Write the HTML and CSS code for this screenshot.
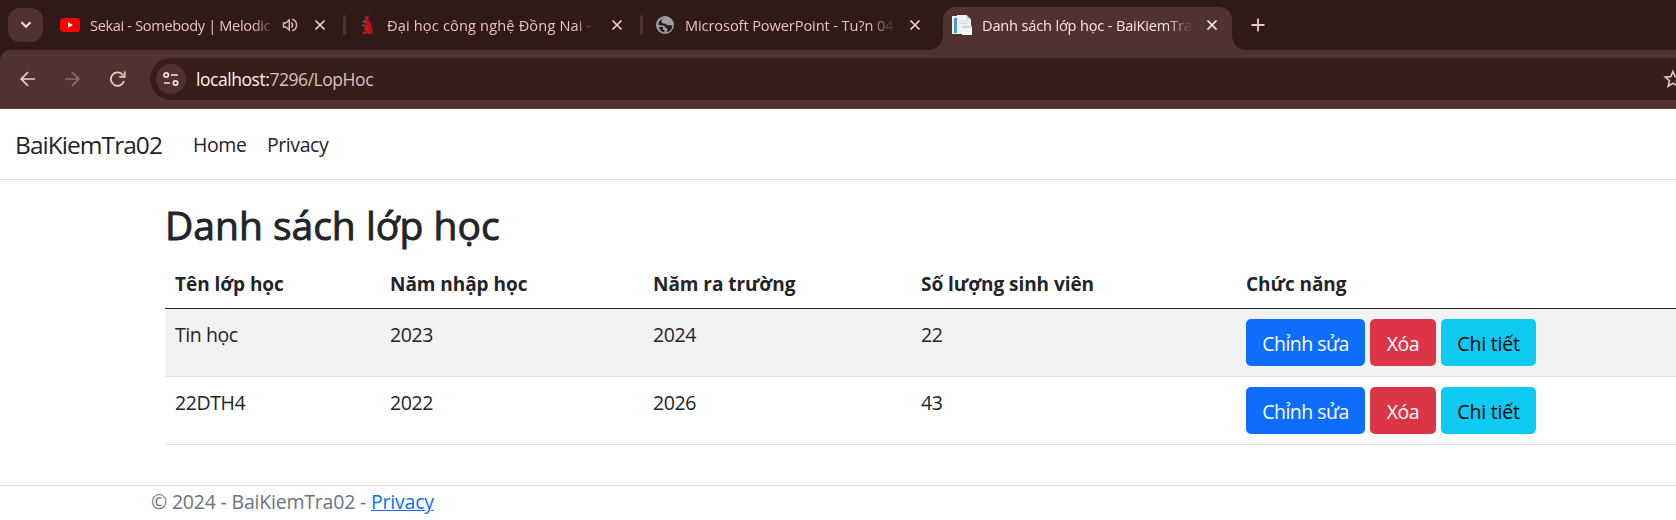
FILE: index.html
```html
<!DOCTYPE html>
<html lang="vi">
<head>
<meta charset="utf-8">
<title>Danh sách lớp học - BaiKiemTra02</title>
<link rel="stylesheet" href="styles.css">
</head>
<body>
<div class="browser">
  <div class="tabstrip">
    <div class="tab-search"><svg width="12" height="8" viewBox="0 0 12 8"><path d="M1.500 1.200 6 5.700l4.500-4.500" fill="none" stroke="#f5dcd9" stroke-width="2.200"/></svg></div>
    <div class="tab tab-one">
      <svg class="fav" width="20" height="20" viewBox="0 0 20 20"><rect y="3" width="20" height="14" rx="3.500" fill="#f00"/><path d="M8 7.200v5.600l5-2.800z" fill="#fff"/></svg>
      <span class="tab-title t1">Sekai - Somebody | Melodic</span>
      <svg class="sound" width="16" height="16" viewBox="0 0 16 16" fill="none" stroke="#d5b8b5" stroke-width="1.500"><path d="M1.500 6h2.300L7.300 3v10L3.800 10H1.500z"/><path d="M9.500 5.500q2.200 2.500 0 5M10.200 2.200c5.800 1.800 5.800 9.800 0 11.600"/></svg>
      <svg class="close" width="12" height="12" viewBox="0 0 12 12"><path d="M1.500 1.500l9 9m0-9l-9 9" stroke="#f5cfca" stroke-width="1.700"/></svg>
    </div>
    <i class="divider"></i>
    <div class="tab tab-two">
      <svg class="fav" width="20" height="20" viewBox="0 0 20 20"><path d="M7.500 1l2 .8L12 0l-.8 4.500L8.500 4z" fill="#c9151b"/><path d="M7.500 5.500L11 4q4 4 4.300 8v7H6v-2l2.500-1L6 14l2.500-1L6.500 11 8.500 10z" fill="#c8141b"/><path d="M9 9q5 1 4 9M10 6q5 2 4.500 9M7 15q3-1 3 4" stroke="#64151a" fill="none" stroke-width=".7"/><path d="M6 5.500h2v2H6zm-.5 4H7V11H5.500z" fill="#2679bd"/></svg>
      <span class="tab-title t2">Đại học công nghệ Đồng Nai - C</span>
      <svg class="close" width="12" height="12" viewBox="0 0 12 12"><path d="M1.500 1.500l9 9m0-9l-9 9" stroke="#f5cfca" stroke-width="1.700"/></svg>
    </div>
    <i class="divider"></i>
    <div class="tab tab-three">
      <svg class="fav" width="20" height="20" viewBox="0 0 20 20"><circle cx="10" cy="10" r="9" fill="#9aa0a6"/><path d="M11.500 3c-4 .3-5 2-5 3.500 0 2 1.800 2 3.500 2.200 1.500.2 1.200 1.500 3 1.500h4.300c.2 4-2.500 6.500-5.800 7.200l1-3c-.5-2.500-3-1-3-4-2.500 0-4.500.2-6.300-1C3.500 6.500 6.500 3 11.500 3zM4 12h4v2.500l1.500 1v2C6.500 17 4.500 15 4 12z" fill="#301a17"/><path d="M8 4.500c2.500-.8 6 0 7.700 3.500h-3.200c-.5-2-3.500-1-4.500-3.500z" fill="#9aa0a6"/></svg>
      <span class="tab-title t3">Microsoft PowerPoint - Tu?n 04.</span>
      <svg class="close" width="12" height="12" viewBox="0 0 12 12"><path d="M1.500 1.500l9 9m0-9l-9 9" stroke="#f5cfca" stroke-width="1.700"/></svg>
    </div>
    <div class="tab tab-active">
      <svg class="fav" width="20" height="20" viewBox="0 0 20 20"><path d="M0 1h5v18H0z" fill="#e9eff3"/><path d="M2 3h3v15H2z" fill="#4f9bc7"/><path d="M5 0h9.500L19 4.500V19H5z" fill="#eef1f4"/><path d="M14.500 0v4.500H19z" fill="#c5d0d9"/><path d="M7 6h9M7 8.500h8" stroke="#d3dae0"/><path d="M10 11h10v9H10z" fill="#f7fafc"/><path d="M10 11h10v2H10zM12 16h6" fill="#c8d4dd" stroke="#d5dde4" stroke-width=".7"/></svg>
      <span class="tab-title t4">Danh sách lớp học - BaiKiemTra</span>
      <svg class="close" width="12" height="12" viewBox="0 0 12 12"><path d="M1.500 1.500l9 9m0-9l-9 9" stroke="#fff0ed" stroke-width="1.700"/></svg>
    </div>
    <svg class="plus" width="14" height="14" viewBox="0 0 14 14"><path d="M7 .5v13M.5 7h13" stroke="#f5c6c0" stroke-width="1.800"/></svg>
  </div>
  <div class="toolbar">
    <svg class="back" width="16" height="16" viewBox="0 0 16 16" fill="none" stroke="#f5c6c0" stroke-width="1.700"><path d="M15 8H1.500M8 1.200L1.200 8 8 14.800"/></svg>
    <svg class="forward" width="16" height="16" viewBox="0 0 16 16" fill="none" stroke="#8d6a67" stroke-width="1.700"><path d="M0 8h13.500M7 1.200L13.800 8 7 14.800"/></svg>
    <svg class="reload" width="16" height="16" viewBox="0 0 16 16" fill="none" stroke="#f5c6c0" stroke-width="1.800"><path d="M14 10a6.700 6.700 0 1 1-.8-5.500"/><path d="M14.700.5v5.300H9.300"/></svg>
    <div class="omnibox">
      <span class="site-info"><svg width="16" height="16" viewBox="0 0 16 16" fill="none" stroke="#f7dfdc" stroke-width="1.700"><circle cx="3.200" cy="4" r="2.200"/><path d="M8 4h7M1 12h6"/><circle cx="12.500" cy="12" r="2.200"/></svg></span>
      <span class="url"><b>localhost:</b>7296/LopHoc</span>
      <svg class="star" width="20" height="20" viewBox="0 0 20 20"><path d="M10 2.500l2.200 5.100 5.500.5-4.200 3.600 1.300 5.500-4.800-2.900-4.800 2.900 1.300-5.500-4.200-3.600 5.500-.5z" fill="none" stroke="#e0c5c2" stroke-width="1.700"/></svg>
    </div>
  </div>
</div>
<header class="navbar">
  <a class="brand">BaiKiemTra02</a>
  <a class="nav-link">Home</a>
  <a class="nav-link">Privacy</a>
</header>
<main class="content">
  <h1>Danh sách lớp học</h1>
  <table class="table">
    <colgroup><col class="c-name"><col class="c-in"><col class="c-out"><col class="c-count"><col></colgroup>
    <thead><tr><th>Tên lớp học</th><th>Năm nhập học</th><th>Năm ra trường</th><th>Số lượng sinh viên</th><th>Chức năng</th></tr></thead>
    <tbody>
      <tr><td>Tin học</td><td>2023</td><td>2024</td><td>22</td><td><div class="actions"><a class="btn edit">Chỉnh sửa</a><a class="btn delete">Xóa</a><a class="btn detail">Chi tiết</a></div></td></tr>
      <tr><td>22DTH4</td><td>2022</td><td>2026</td><td>43</td><td><div class="actions"><a class="btn edit">Chỉnh sửa</a><a class="btn delete">Xóa</a><a class="btn detail">Chi tiết</a></div></td></tr>
    </tbody>
  </table>
</main>
<footer class="footer">© 2024 - BaiKiemTra02 - <a>Privacy</a></footer>
</body>
</html>
```
FILE: styles.css
```css
* { box-sizing: border-box; }
body {
  margin: 0;
  height: 520px;
  overflow: hidden;
  background: #fff;
  color: #212529;
  font: 19.500px/30px "Open Sans", "Noto Sans", sans-serif;
  letter-spacing: -0.420px;
}
svg { display: block; flex: none; }
.browser { height: 109px; background: #301a17; overflow: hidden; }
.tabstrip {
  height: 50px;
  display: flex;
  align-items: center;
  padding-left: 8px;
}
.tab-search {
  width: 35px;
  height: 34px;
  border-radius: 12px;
  background: #503331;
  display: flex;
  align-items: center;
  justify-content: center;
  flex: none;
}
.tab { display: flex; align-items: center; height: 50px; flex: none; color: #ecc3be; }
.tab-one { width: 300px; padding-left: 17px; }
.tab-two { width: 294px; padding-left: 11px; }
.tab-three { width: 300px; padding-left: 12px; }
.tab-title {
  margin-left: 10px;
  width: 210px;
  overflow: hidden;
  white-space: nowrap;
  font-size: 14.600px;
  line-height: 24px;
  letter-spacing: -0.100px;
  -webkit-mask-image: linear-gradient(90deg, #000 88%, transparent);
  mask-image: linear-gradient(90deg, #000 88%, transparent);
}
.t1 { width: 185px; letter-spacing: -0.350px; }
.t2 {
  letter-spacing: 0.150px;
  -webkit-mask-image: linear-gradient(90deg, #000 90%, transparent 99%);
  mask-image: linear-gradient(90deg, #000 90%, transparent 99%);
}
.t4 { letter-spacing: -0.180px; }
.sound { margin-left: 7px; }
.close { margin-left: 14px; }
.tab-one .close { margin-left: 16px; }
.divider { width: 3px; height: 20px; border-radius: 2px; background: #503331; flex: none; }
.tab-active {
  position: relative;
  width: 289px;
  height: 43px;
  margin-top: 7px;
  padding: 0 0 7px 9px;
  border-radius: 13px 13px 0 0;
  background: #503331;
  color: #fbe5e2;
}
.tab-active::before, .tab-active::after {
  content: "";
  position: absolute;
  bottom: 0;
  width: 14px;
  height: 14px;
}
.tab-active::before { left: -14px; background: radial-gradient(circle at 0 0, transparent 13.500px, #503331 14px); }
.tab-active::after { right: -14px; background: radial-gradient(circle at 100% 0, transparent 13.500px, #503331 14px); }
.plus { margin-left: 19px; }
.toolbar {
  height: 59px;
  display: flex;
  align-items: center;
  padding-left: 20px;
  background: #503331;
  border-bottom: 1px solid #5c4644;
  border-top-left-radius: 10px;
}
.forward { margin-left: 29px; }
.reload { margin-left: 29px; }
.omnibox {
  flex: none;
  width: 1600px;
  height: 42px;
  margin-left: 24px;
  padding-left: 6px;
  display: flex;
  align-items: center;
  border-radius: 21px;
  background: #381e1b;
}
.site-info {
  width: 30px;
  height: 30px;
  border-radius: 50%;
  background: #503331;
  display: flex;
  align-items: center;
  justify-content: center;
}
.url { margin-left: 10px; width: 1467px; color: #dbc0bd; font-size: 17.500px; letter-spacing: -0.450px; }
.url b { color: #fff0ed; font-weight: 400; }
.navbar {
  height: 71px;
  display: flex;
  align-items: center;
  padding: 2px 0 0 15px;
  border-bottom: 1px solid #dee2e6;
}
.brand { width: 178px; font-size: 24.500px; letter-spacing: -0.950px; }
.nav-link { width: 74px; }
.content { padding: 21px 0 40px 165px; }
h1 {
  margin: 0 0 9px;
  font-size: 39px;
  line-height: 48px;
  font-weight: 400;
  letter-spacing: 0;
  -webkit-text-stroke: 0.900px #212529;
}
.table { width: 1521px; table-layout: fixed; border-collapse: collapse; }
.c-name { width: 215px; }
.c-in { width: 263px; }
.c-out { width: 268px; }
.c-count { width: 325px; }
th, td { padding: 11px 10px 9px; text-align: left; vertical-align: top; border-bottom: 1px solid #dee2e6; }
thead th { border-bottom-color: #212529; font-weight: 700; font-size: 19px; letter-spacing: -0.050px; }
tbody tr:first-child { background: #f2f2f2; }
.actions { display: flex; gap: 5px; margin: -1px 0 1px; }
.btn {
  height: 47px;
  padding-top: 10px;
  line-height: 30px;
  border-radius: 5px;
  text-align: center;
  color: #fff;
}
.edit { width: 119px; background: #0d6efd; letter-spacing: -0.500px; }
.delete { width: 66px; background: #dc3545; }
.detail { width: 95px; background: #0dcaf0; color: #000; letter-spacing: -0.200px; }
.footer { border-top: 1px solid #dee2e6; padding-left: 151px; color: #6c757d; line-height: 32px; letter-spacing: -0.200px; }
.footer a { color: #0d6efd; text-decoration: underline; }
```
